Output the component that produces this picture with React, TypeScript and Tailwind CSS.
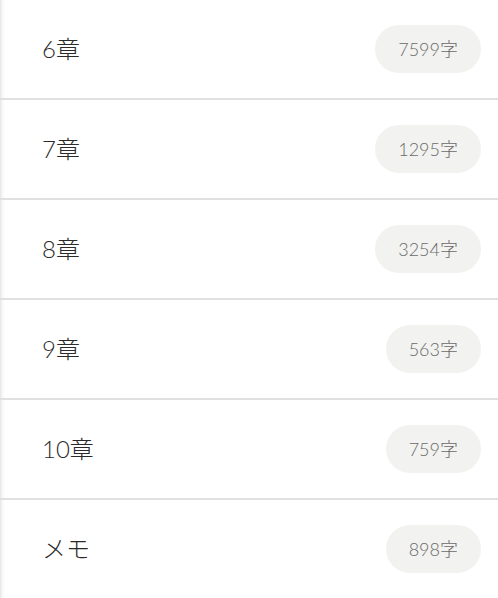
import React from "react";

const rows = [
  { title: "6章", count: "7599字" },
  { title: "7章", count: "1295字" },
  { title: "8章", count: "3254字" },
  { title: "9章", count: "563字" },
  { title: "10章", count: "759字" },
  { title: "メモ", count: "898字" },
];

export default function App() {
  return (
    <div
      className="w-[498px] h-[598px] overflow-hidden bg-[linear-gradient(to_right,#e4e4e4_0px,#f6f6f6_2px,#ffffff_5px)]"
      style={{ fontFamily: "Lato, 'Noto Sans CJK JP', sans-serif" }}
    >
      {rows.map((r, i) => (
        <div
          key={i}
          className="h-[100px] flex items-center justify-between pl-[42px] pr-[17px] border-b-2 border-[#e0e0e0] box-border"
        >
          <span className="text-[24px] font-light text-[#2a2a2a] leading-none">{r.title}</span>
          <span className="h-[48px] px-[23px] flex items-center rounded-full bg-[#f2f2f0] text-[18px] font-light text-[#6a6a6a] leading-none">
            {r.count}
          </span>
        </div>
      ))}
    </div>
  );
}
